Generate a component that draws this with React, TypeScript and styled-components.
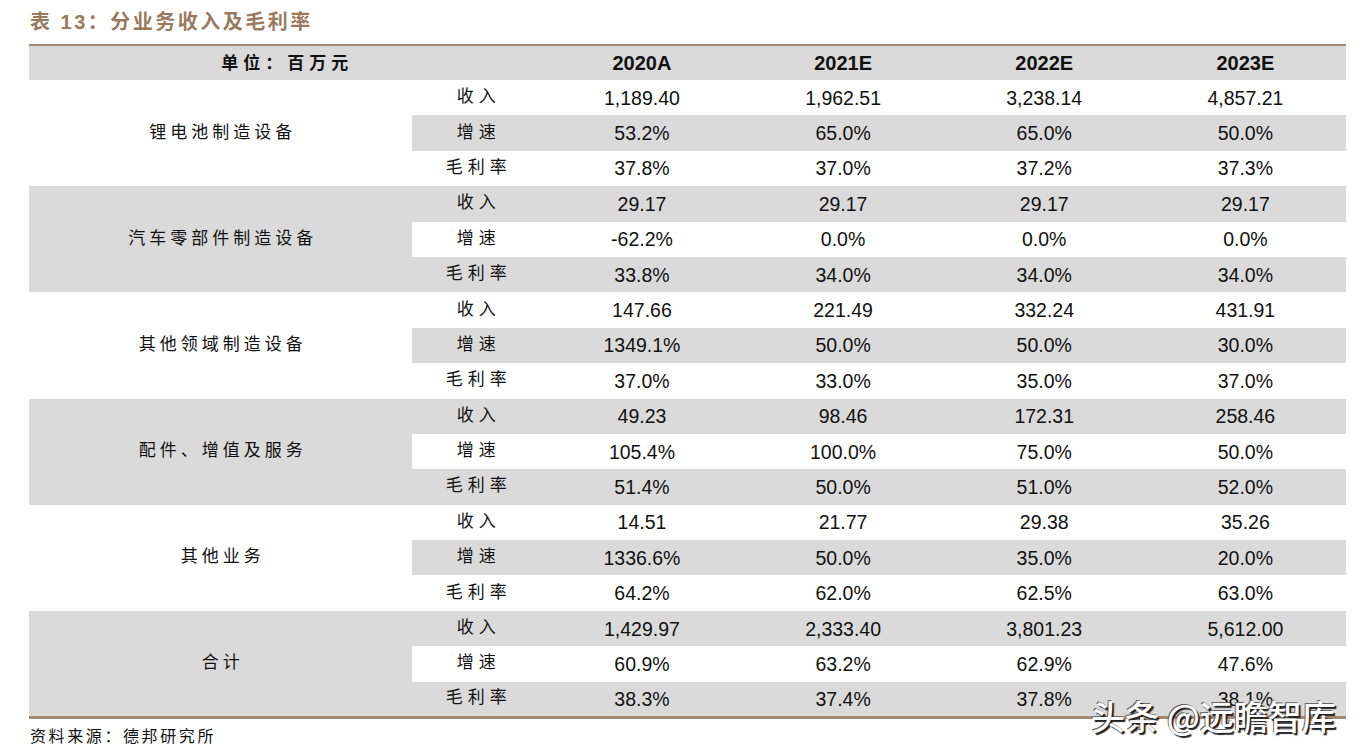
import { createGlobalStyle } from "styled-components";
import styled from "styled-components";

interface SegmentRow {
  label: string;
  values: string[];
}

interface Segment {
  name: string;
  rows: SegmentRow[];
}

const years = ["2020A", "2021E", "2022E", "2023E"];

const segments: Segment[] = [
  {
    name: "锂电池制造设备",
    rows: [
      { label: "收入", values: ["1,189.40", "1,962.51", "3,238.14", "4,857.21"] },
      { label: "增速", values: ["53.2%", "65.0%", "65.0%", "50.0%"] },
      { label: "毛利率", values: ["37.8%", "37.0%", "37.2%", "37.3%"] },
    ],
  },
  {
    name: "汽车零部件制造设备",
    rows: [
      { label: "收入", values: ["29.17", "29.17", "29.17", "29.17"] },
      { label: "增速", values: ["-62.2%", "0.0%", "0.0%", "0.0%"] },
      { label: "毛利率", values: ["33.8%", "34.0%", "34.0%", "34.0%"] },
    ],
  },
  {
    name: "其他领域制造设备",
    rows: [
      { label: "收入", values: ["147.66", "221.49", "332.24", "431.91"] },
      { label: "增速", values: ["1349.1%", "50.0%", "50.0%", "30.0%"] },
      { label: "毛利率", values: ["37.0%", "33.0%", "35.0%", "37.0%"] },
    ],
  },
  {
    name: "配件、增值及服务",
    rows: [
      { label: "收入", values: ["49.23", "98.46", "172.31", "258.46"] },
      { label: "增速", values: ["105.4%", "100.0%", "75.0%", "50.0%"] },
      { label: "毛利率", values: ["51.4%", "50.0%", "51.0%", "52.0%"] },
    ],
  },
  {
    name: "其他业务",
    rows: [
      { label: "收入", values: ["14.51", "21.77", "29.38", "35.26"] },
      { label: "增速", values: ["1336.6%", "50.0%", "35.0%", "20.0%"] },
      { label: "毛利率", values: ["64.2%", "62.0%", "62.5%", "63.0%"] },
    ],
  },
  {
    name: "合计",
    rows: [
      { label: "收入", values: ["1,429.97", "2,333.40", "3,801.23", "5,612.00"] },
      { label: "增速", values: ["60.9%", "63.2%", "62.9%", "47.6%"] },
      { label: "毛利率", values: ["38.3%", "37.4%", "37.8%", "38.1%"] },
    ],
  },
];

export default function App() {
  return (
    <>
      <GlobalStyle />
      <Page>
        <Title>表 13：分业务收入及毛利率</Title>
        <Table>
          <colgroup>
            <col style={{ width: 383 }} />
            <col style={{ width: 129 }} />
            {years.map((y) => (
              <col key={y} style={{ width: 201 }} />
            ))}
          </colgroup>
          <thead>
            <HeadRow>
              <HeadUnit colSpan={2}>单位：百万元</HeadUnit>
              {years.map((y) => (
                <HeadYear key={y}>{y}</HeadYear>
              ))}
            </HeadRow>
          </thead>
          <tbody>
            {segments.map((seg, si) =>
              seg.rows.map((row, ri) => {
                const index = si * 3 + ri;
                return (
                  <Row key={seg.name + row.label} $shaded={index % 2 === 1}>
                    {ri === 0 && (
                      <GroupCell rowSpan={3} $shaded={si % 2 === 1}>
                        {seg.name}
                      </GroupCell>
                    )}
                    <SubCell>{row.label}</SubCell>
                    {row.values.map((v, vi) => (
                      <NumCell key={vi}>{v}</NumCell>
                    ))}
                  </Row>
                );
              })
            )}
          </tbody>
        </Table>
        <Source>资料来源：德邦研究所</Source>
        <Watermark>头条 @远瞻智库</Watermark>
      </Page>
    </>
  );
}

/* ---------------- styled-components ---------------- */

const GlobalStyle = createGlobalStyle`
  html, body {
    margin: 0;
    padding: 0;
    background: #ffffff;
  }
  body {
    font-family: "Liberation Sans", "Noto Sans CJK SC", sans-serif;
    color: #111;
  }
`;

const Page = styled.div`
  position: relative;
  width: 1364px;
  height: 756px;
  padding: 8px 0 0 29px;
  box-sizing: border-box;
  overflow: hidden;
`;

const Title = styled.div`
  font-family: "Liberation Sans", "Noto Sans CJK SC", sans-serif;
  font-weight: bold;
  font-size: 20px;
  line-height: 28px;
  letter-spacing: 2.5px;
  color: #9a7a5e;
  padding-left: 1px;
  height: 36px;
`;

const Table = styled.table`
  border-collapse: collapse;
  table-layout: fixed;
  width: 1317px;
  border-top: 2px solid #a38872;
  border-bottom: 3px solid #a38872;
`;

const HeadRow = styled.tr`
  height: 35px;
  background: #dadada;
`;

const HeadUnit = styled.th`
  padding: 0 0 3px 4px;
  font-family: "Noto Sans CJK SC", sans-serif;
  font-size: 17px;
  line-height: 24px;
  font-weight: bold;
  letter-spacing: 5px;
  text-align: center;
`;

const HeadYear = styled.th`
  padding: 0;
  font-size: 20px;
  line-height: 24px;
  font-weight: bold;
  text-align: center;
`;

const Row = styled.tr<{ $shaded: boolean }>`
  height: 35.4px;
  background: ${(p) => (p.$shaded ? "#dadada" : "#ffffff")};
`;

const GroupCell = styled.td<{ $shaded: boolean }>`
  padding: 0 0 6px 4px;
  background: ${(p) => (p.$shaded ? "#dadada" : "#ffffff")};
  font-family: "Noto Sans CJK SC", sans-serif;
  font-size: 17px;
  letter-spacing: 4px;
  text-align: center;
  vertical-align: middle;
`;

const SubCell = styled.td`
  padding: 0 0 5px 4px;
  font-family: "Noto Sans CJK SC", sans-serif;
  font-size: 17px;
  line-height: 24px;
  letter-spacing: 5px;
  text-align: center;
  vertical-align: middle;
`;

const NumCell = styled.td`
  padding: 0;
  font-size: 19.5px;
  line-height: 24px;
  text-align: center;
  vertical-align: middle;
`;

const Source = styled.div`
  font-family: "Noto Sans CJK SC", sans-serif;
  font-size: 16px;
  line-height: 20px;
  margin-top: 6px;
  padding-left: 1px;
  letter-spacing: 2.6px;
`;

const Watermark = styled.div`
  position: absolute;
  left: 1091px;
  top: 694px;
  font-family: "Noto Sans CJK SC", sans-serif;
  font-size: 34px;
  line-height: 44px;
  font-weight: 500;
  color: #ffffff;
  text-shadow: 2px 2px 1px #222, -1px -1px 0 #666;
  white-space: nowrap;
`;
